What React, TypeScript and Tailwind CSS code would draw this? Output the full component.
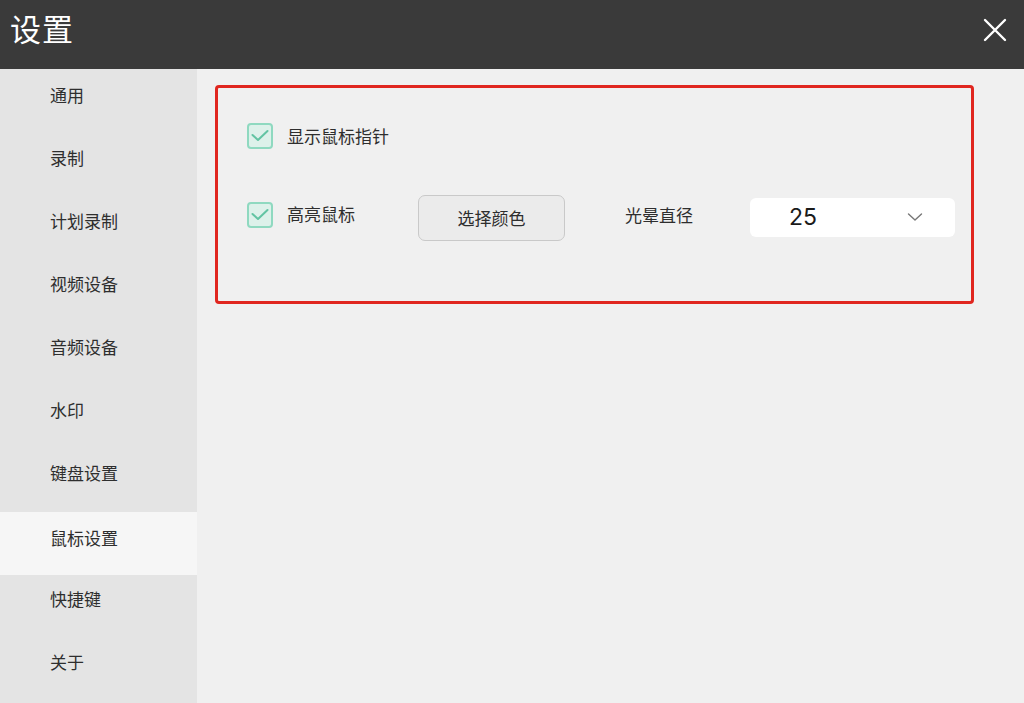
import React, { useState } from 'react';

const NAV_ITEMS = ['通用', '录制', '计划录制', '视频设备', '音频设备', '水印', '键盘设置', '鼠标设置', '快捷键', '关于'];

const FONT = { fontFamily: '"Noto Sans CJK SC", "Noto Sans", sans-serif' };

const CheckBox: React.FC<{ checked: boolean; onToggle: () => void }> = ({ checked, onToggle }) => (
  <button
    onClick={onToggle}
    className="w-[26px] h-[26px] rounded-[4px] border-2 border-[#8fd9c0] bg-[#ddf1ea] flex items-center justify-center"
  >
    {checked && (
      <svg width="20" height="20" viewBox="0 0 20 20" fill="none">
        <path d="M2.5 9 L8 14 L17.5 5" stroke="#62c4a3" strokeWidth="2" strokeLinecap="round" strokeLinejoin="round" />
      </svg>
    )}
  </button>
);

const App: React.FC = () => {
  const [active, setActive] = useState(7);
  const [showPointer, setShowPointer] = useState(true);
  const [highlight, setHighlight] = useState(true);

  return (
    <div className="w-[1024px] h-[703px] flex flex-col bg-[#f0f0f0] overflow-hidden" style={FONT}>
      {/* Title bar */}
      <header className="h-[69px] flex-shrink-0 bg-[#3a3a3a] flex items-center justify-between pl-[10px] pr-[14px]">
        <span className="text-[31px] text-white leading-none tracking-[1px] pb-[14px]">设置</span>
        <button className="w-[30px] h-[30px] flex items-center justify-center mb-[10px]">
          <svg width="24" height="24" viewBox="0 0 24 24" fill="none">
            <path d="M2 2 L22 22 M22 2 L2 22" stroke="#ffffff" strokeWidth="2.4" strokeLinecap="round" />
          </svg>
        </button>
      </header>

      <div className="flex flex-1 min-h-0">
        {/* Sidebar */}
        <nav className="w-[197px] flex-shrink-0 bg-[#e4e4e4] flex flex-col">
          {NAV_ITEMS.map((item, i) => (
            <div
              key={item}
              onClick={() => setActive(i)}
              className={`h-[63px] flex-shrink-0 pl-[50px] pt-[15px] cursor-pointer ${i === active ? 'bg-[#f6f6f6] mt-[2px] -mb-[2px]' : ''}`}
            >
              <span className="block text-[17px] leading-[22px] text-[#2e2e2e]">{item}</span>
            </div>
          ))}
        </nav>

        {/* Content */}
        <main className="flex-1 pl-[18px] pt-[16px]">
          <div className="w-[759px] h-[219px] border-[3px] border-[#e0261f] rounded-[4px] pl-[29px] pt-[35px]">
            <div className="flex items-center h-[26px]">
              <CheckBox checked={showPointer} onToggle={() => setShowPointer(!showPointer)} />
              <span className="ml-[14px] text-[17px] text-[#2e2e2e]">显示鼠标指针</span>
            </div>

            <div className="flex items-center mt-[48px] h-[46px] -translate-y-[10px]">
              <div className="flex items-center w-[171px] pt-[10px]">
                <CheckBox checked={highlight} onToggle={() => setHighlight(!highlight)} />
                <span className="ml-[14px] text-[17px] text-[#2e2e2e] -translate-y-[1px]">高亮鼠标</span>
              </div>
              <button className="w-[147px] h-[46px] rounded-[7px] border border-[#c9c9c9] bg-[#ebebeb] text-[17px] text-[#2e2e2e] translate-y-[8px]">
                选择颜色
              </button>
              <span className="ml-[60px] text-[17px] text-[#2e2e2e] pt-[10px]">光晕直径</span>
              <div className="ml-[57px] w-[205px] h-[39px] rounded-[6px] bg-white flex items-center justify-between pl-[39px] pr-[32px] translate-y-[7px]">
                <span className="text-[23px] text-[#1a1a1a]" style={{ fontFamily: 'Inter, "Noto Sans", sans-serif' }}>25</span>
                <svg width="16" height="10" viewBox="0 0 16 10" fill="none">
                  <path d="M1.5 2 L8 8 L14.5 2" stroke="#777777" strokeWidth="1.4" strokeLinecap="round" strokeLinejoin="round" />
                </svg>
              </div>
            </div>
          </div>
        </main>
      </div>
    </div>
  );
};

export default App;
